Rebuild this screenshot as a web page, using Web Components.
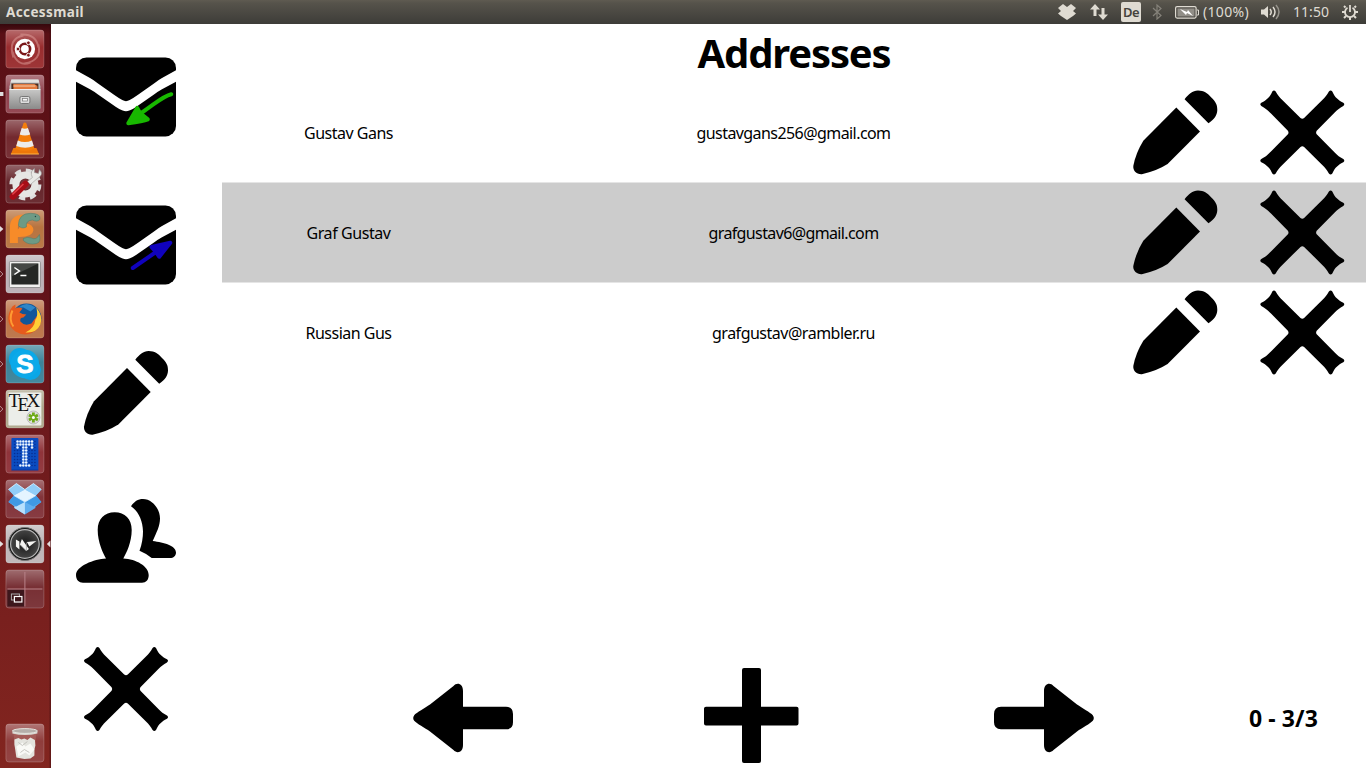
<!DOCTYPE html>
<html lang="en">
<head>
<meta charset="utf-8">
<title>Accessmail</title>
<style>
html,body{margin:0;height:100%;overflow:hidden;background:#fff}
</style>
</head>
<body>
<mail-desktop></mail-desktop>
<script>
const define = (name, html, setup) => customElements.define(name, class extends HTMLElement {
  connectedCallback() {
    if (this.shadowRoot) return;
    const root = this.attachShadow({mode: 'open'});
    root.innerHTML = typeof html === 'function' ? html(this) : html;
    if (setup) setup(this, root);
  }
});

/* Label whose tracking is adjusted so that it fills a given width. */
define('fit-label', '<style>:host{display:inline-block;white-space:nowrap;line-height:1}span{display:inline-block}</style><span><slot></slot></span>', (el, root) => {
  const span = root.querySelector('span');
  const target = +el.getAttribute('width');
  const n = el.textContent.length;
  const w = span.getBoundingClientRect().width;
  if (target && w) {
    const ls = (target - w) / n;
    span.style.letterSpacing = ls + 'px';
  }
});

/* Large pictograms of the application, on a 100 x 100 grid. */
const envelope = '<rect y="10.4" width="100" height="79" rx="10.5"/><path fill="#fff" d="M-1 22.8L0 23.3L14 31Q18 33.2 22 36.500L38 47.8Q47 54.2 50 54.2Q53 54.2 62 47.8L78 36.500Q82 33.2 86 31L101 22.8V34.3L86 42.3Q82 44.5 78 47.5L60 60Q53 64.3 50 64.3Q47 64.3 40 60L22 47.5Q18 44.5 14 42.3L-1 34.3Z"/>';
const glyphs = {
  inbox: envelope + '<g fill="#18b800" stroke="#18b800" stroke-linecap="round" stroke-linejoin="round"><path d="M95.3 47.2C87 49 80 56 66 65.5" fill="none" stroke-width="4"/><path stroke-width="4" d="M52.3 76.2L61.2 60.9L64 66L71.8 72.4Q67 74.5 52.3 76.2Z"/></g>',
  outbox: envelope + '<g fill="#1002bd" stroke="#1002bd" stroke-linecap="round" stroke-linejoin="round"><path d="M56.8 73L80 57" fill="none" stroke-width="4"/><path stroke-width="4" d="M94.3 47.8L83.3 61.700L79.500 56.5L75.500 51.9Z"/></g>',
  pencil: '<path d="M51 25L74.7 49L42.3 81.6Q31 88.8 16.5 91.7C11 92 7.5 88 8 83.5Q10.5 70.5 18 58.3Z"/><path d="M59.3 16.7C63.5 11.5 67 8 72.7 8C79 8.2 81.5 10 86 15C90.5 19.5 92 22 92 27.5C91.8 33 89 36.7 83.2 40.7Z"/>',
  people: '<path d="M30 67.4C27 62.5 21.7 51 21.7 39C21.7 28 28.5 21.3 38.7 21.3S55.7 28 55.7 39C55.7 51 50.5 62 47.3 67.4C60 68 72.7 75 72.7 84C72.7 89 70 91.7 66 91.7H7C3 91.7 0 89 0 84C0 75 18 68 30 67.4Z"/><path d="M55 15.3C58 10.5 62 8 67 8C76 8 84 17.5 84 27.5C84 35 80.5 41.5 76.7 50C88 51.5 100 54.5 100 61.5C100 65 97.5 67 94 67H75.7Q70.5 62.7 63.5 59.8Q67 50.5 67 40.5C66.8 29 62 20 55 15.3Z"/>',
  cross: '<path d="M20 9Q21.700 7 23.400 9C25.500 12.800 27 14.600 30 17.600L48.200 35.600Q50 36.800 51.800 35.600L70 17.600C73 14.600 74.500 12.800 76.600 9Q78.300 7 80 9C81.500 12.500 83 14.500 84.500 15.800C86.500 17.800 88 18.800 91 20.300Q93 21.800 91 23.500C87.200 25.500 85.400 27 82.400 30L64.400 48.200Q63.200 50 64.400 51.800L82.400 70C85.400 73 87.200 74.500 91 76.500Q93 78.200 91 79.700C88 81.200 86.500 82.200 84.500 84.200C83 85.500 81.500 87.500 80 91Q78.300 93 76.600 91C74.500 87.200 73 85.400 70 82.400L51.800 64.400Q50 63.200 48.200 64.400L30 82.400C27 85.400 25.500 87.200 23.400 91Q21.700 93 20 91C18.500 87.500 17 85.500 15.500 84.200C13.500 82.200 12 81.200 9 79.700Q7 78.200 9 76.500C12.800 74.500 14.600 73 17.600 70L35.600 51.800Q36.800 50 35.600 48.200L17.600 30C14.600 27 12.800 25.500 9 23.500Q7 21.800 9 20.300C12 18.800 13.500 17.800 15.500 15.800C17 14.500 18.500 12.500 20 9Z"/>',
  left: '<path d="M1.200 47.200C3.500 44.500 12 40 17 36.500L40.500 18C44 14 50 15.500 50 23V38.700H93Q100 39 100 46V54.300Q100 61.200 93 61.300H50V77C50 84.500 44 86 40.500 82L17 63.500C12 60 3.500 55.500 1.200 52.800Q-.8 50 1.200 47.200Z"/>',
  plus: '<path d="M42 0H57Q59 0 59 2V38.800H94.500Q96.500 38.800 96.500 40.500V55.500Q96.500 57.500 94.500 57.500H59V93Q59 95 57 95H42Q40 95 40 93V57.500H4Q2 57.500 2 55.500V40.500Q2 38.800 4 38.800H40V2Q40 0 42 0Z"/>'
};
glyphs.right = `<g transform="matrix(-1 0 0 1 100 0)">${glyphs.left}</g>`;

define('app-icon', el => `<style>:host{display:block;width:100px;height:100px;flex:none}svg{display:block;overflow:hidden}</style><svg width="100" height="100" viewBox="${el.getAttribute('offset') || '0 0'} 100 100">${glyphs[el.getAttribute('name')]}</svg>`);

/* Launcher artwork, on a 39 x 39 grid. */
let dots = '';
for (let y = 0; y < 9; y++) for (let x = 0; x < 8; x++) {
  const on = (y < 2 && x > 0 && x < 7) || (y === 2 && [1, 3, 4, 6].includes(x)) || (y > 2 && y < 8 && (x === 3 || x === 4)) || (y === 8 && x > 1 && x < 6);
  dots += `<circle cx="${9.200 + x * 2.900}" cy="${7 + y * 3}" r="${on ? 1.250 : .8}" fill="${on ? '#e8f4ff' : '#082f91'}"/>`;
}
const apps = {
  dash: ['#952426', '<g fill="none" stroke="#e0a09c" opacity=".5"><path stroke-width="2" d="M8 28Q2 9 18 6M15 5Q31 4 33 18M33 15Q37 31 19 34M25 33Q12 38 7 22"/></g><circle cx="19.500" cy="19.500" r="10.200" fill="#fff"/><circle cx="19.500" cy="19.500" r="5.200" fill="none" stroke="#7a1719" stroke-width="2.600"/><g fill="#7a1719" stroke="#fff" stroke-width=".9"><circle cx="12.600" cy="19.500" r="1.900"/><circle cx="23" cy="13.300" r="1.900"/><circle cx="23" cy="25.700" r="1.900"/></g>'],
  files: ['#8c3a46', '<path d="M6 5h27l2 7v22H4V12z" fill="#bbb"/><path d="M6 5h27l1 3H5z" fill="#e2e2e0"/><path d="M6 9h27v6H6z" fill="#4a2b20"/><path d="M8 9.500h21l3 2V15H8z" fill="#e2793e"/><path d="M8 11.500h22" stroke="#f8cfaa"/><rect x="4" y="14.500" width="31" height="20" rx="1" fill="url(#metal)"/><path d="M4 15h31" stroke="#eee"/><rect x="14.500" y="22" width="10" height="7" rx="1.500" fill="#ddd" stroke="#777"/><rect x="17" y="24" width="5" height="2.500" fill="#f8f8f8" stroke="#777" stroke-width=".7"/>'],
  vlc: ['#6d2026', '<path d="M8 28.500h23l2.500 6H5.500z" fill="#ed7709"/><path d="M5.500 34.500h28" stroke="#ffb340"/><path d="M18 4Q19.500 2 21 4L29 29Q20 34 10 29z" fill="#f47e0b"/><path d="M16.300 8.500Q19.500 10 22.500 8.500L24.800 15Q19.500 17 14.300 15zM12.400 21Q19.500 24 26.600 21L28.300 26.500Q20 30 10.900 26.500z" fill="#ececec"/>'],
  settings: ['#5f1c22', '<circle cx="20" cy="20" r="13.500" fill="none" stroke="#dedede" stroke-width="5" stroke-dasharray="6 4.600"/><circle cx="20" cy="20" r="9.500" fill="none" stroke="#e6e6e4" stroke-width="7"/><circle cx="20" cy="20" r="5" fill="#7d343a"/><path d="M27 13Q24 7 29 4L29 8L33 9L34 5Q39 10 32 14L25 20L22 17Z" fill="#e9e9e7" stroke="#999" stroke-width=".6"/><path d="M7.500 32L20 19.500" stroke="#a70d17" stroke-width="6.500" stroke-linecap="round"/><path d="M7 30L18 19.500" stroke="#e4434a" stroke-width="1.500"/>'],
  swirl: ['#b56e38', '<path d="M4.500 33.500V20C3.500 9 10 5 20 5L16 13Q12 14 12.500 20Q16 14 21 14Q28 15 28 21Q27 28 12.500 27.500V33.500Z" fill="#f78b29"/><path d="M13 16Q13 4 25 3.800Q36 4 34.500 10Q32 13 27 10.500Q20 11 21 17.500Q16 20 13 16ZM18 29Q22 27 26 28.500Q31 31 34 25Q36 33 31 34Q23 36 18 31Z" fill="#6d9a85" stroke="#4d7b6b" stroke-width=".5"/><circle cx="30" cy="7" r=".7" fill="#244"/>'],
  terminal: ['#b8adb3', '<rect x="4" y="7" width="31" height="26" rx="1" fill="#f0f0ef" stroke="#777" stroke-width=".7"/><rect x="6" y="9" width="27" height="21" fill="#252725"/><path d="M6 9h27L6 22z" fill="#565956" opacity=".65"/><path d="M9 13l5 3.500L9 20M15 21h6" fill="none" stroke="#fff" stroke-width="1.500"/>'],
  firefox: ['#b96e40', '<circle cx="21" cy="19" r="15" fill="#12569a"/><path d="M13 8Q21 1 30 8L25 12L18 8z" fill="#2d86c8"/><path d="M5 10Q7 6 10 5L10 9Q13 7 17 9L14 13Q17 15 21 15L18 18Q14 18 15 22Q19 27 26 24L34 13Q39 25 29 32Q20 38 10 32Q-1 24 5 10Z" fill="#e65a1d"/><path d="M31 8Q38 17 35 25Q31 34 20 33Q29 29 30 20Q33 17 31 8Z" fill="#ffcf36"/><path d="M7 11Q3 20 8 27" stroke="#ff9b32" fill="none" stroke-width="2"/>'],
  skype: ['#347e95', '<circle cx="14.500" cy="14.500" r="11" fill="#0aa6e6"/><circle cx="25" cy="25" r="10.500" fill="#0aa6e6"/><circle cx="19.500" cy="19.500" r="14.200" fill="#0ba9e9"/><text x="19.500" y="28.500" text-anchor="middle" fill="#fff" stroke="#fff" stroke-width=".8" font-family="Liberation Sans,sans-serif" font-weight="700" font-size="26">S</text>'],
  tex: ['#aaa386', '<rect x="3" y="3" width="33" height="33" rx="1" fill="#eceee9"/><g font-family="Liberation Serif,serif" font-size="19" fill="#111"><text x="3" y="17">T</text><text x="12" y="21.500">E</text><text x="21" y="17">X</text></g><circle cx="28" cy="28" r="6.500" fill="#ddd" stroke="#aaa" stroke-width=".7"/><path d="M28 23v10M23.500 25.500l9 5M32.500 25.500l-9 5" stroke="#6eaa18" stroke-width="2.800"/><circle cx="28" cy="28" r="1.500" fill="#fff"/>'],
  dots: ['#8b2b32', `<rect x="6" y="3.500" width="27" height="32" rx="1" fill="#0b4cc0"/><path d="M6 35.500h27" stroke="#0737a2"/>${dots}`],
  dropbox: ['#7d2b32', '<path d="M11 4L19.500 10L28 4L36 10L30.500 16L36 22.500L30 27V28.500L19.500 35L9 28.500V27L3 22.500L8.500 16L3 10Z" fill="#60adee"/><path d="M11 4L19.500 10L8.500 16L3 10ZM28 4L36 10L30.500 16L19.500 10Z" fill="#91cdf8"/><path d="M8.500 16L19.500 10L30.500 16L19.500 22.500Z" fill="#e4f4ff"/><path d="M8.500 16L19.500 22.500L11 27L3 22.500ZM30.500 16L19.500 22.500L28 27L36 22.500Z" fill="#4099e4"/><path d="M19.500 22.500V35L9 28.500V27L11 27Z" fill="#b9e0fc"/><path d="M8.500 16L19.500 22.500L30.500 16M3 10L11 4L19.500 10L28 4L36 10" fill="none" stroke="#e1f2ff" stroke-width=".8"/>'],
  kivy: ['#bcb4b6', '<circle cx="19.500" cy="19.500" r="16.500" fill="#171717" stroke="#777" stroke-width="1"/><circle cx="19.500" cy="19.500" r="14.300" fill="url(#disc)" stroke="#b5b5b5" stroke-width="1.200"/><path d="M10.500 15l3.500 2v8l-3.500-3zM14.500 20l2-5.500 7 10L21 26.500zM21.500 17.500l9.500-1-7 5.500z" fill="#f4f4f2"/><path d="M14.500 20L21 26.500V18" fill="none" stroke="#999" stroke-width=".7"/>'],
  workspace: ['#72272c', '<rect x="2" y="20" width="17" height="17" fill="#3d171c"/><path d="M19.500 2.500V37M2 19.500H37" stroke="#b98289"/><rect x="6" y="24.500" width="8" height="6" fill="#3d171c" stroke="#aaa"/><rect x="9" y="27" width="7.500" height="5.500" fill="#3d171c" stroke="#fff" stroke-width="1.200"/>'],
  trash: ['#8b3534', '<path d="M8 9h23l-2.500 24q-9 4-18 0z" fill="#a8615e" opacity=".75"/><path d="M9 16l4-1.500 3 1.500 3-1 3 1.500 3-2.500 4.500 2.500L30 22l-1 4v6l-4 3-6 .5-8-1.500-1-7-1-6z" fill="#e4e4df"/><path d="M11 23l6-4 3 4 5-3 4 6-5 6-4-3-7 4z" fill="#f9f9f6"/><path d="M15 29l4-3 5 3M13 19l4 3 5-4" fill="none" stroke="#bab9b2" stroke-width=".8"/><path d="M7 8v2q12.500 3 25 0V8z" fill="#d8d5d0"/><ellipse cx="19.500" cy="7.500" rx="12.500" ry="2.400" fill="#b5aeaa" stroke="#e5e5e0"/>']
};

define('launcher-tile', el => {
  const [color, art] = apps[el.getAttribute('app')];
  const mark = el.getAttribute('mark');
  const left = {dot: '<rect x="-6" y="17.500" width="4" height="4" fill="#ddd"/>', full: '<path d="M-6 16L-2 19.500L-6 23Z" fill="#e2dede"/>', open: '<path d="M-6 16L-2.500 19.500L-6 23" fill="none" stroke="#b69094"/>', active: '<path d="M-6 16L-2 19.500L-6 23ZM45 16L41.500 19.500L45 23Z" fill="#e2dede"/>'}[mark] || '';
  return `<style>:host{display:block;width:39px;height:39px;flex:none}svg{display:block;overflow:visible}</style>
  <svg width="39" height="39" viewBox="-.4 -.5 39 39"><defs><linearGradient id="shine" x2="0" y2="1"><stop stop-color="#fff" stop-opacity=".32"/><stop offset=".45" stop-color="#fff" stop-opacity=".04"/><stop offset="1" stop-color="#fff" stop-opacity=".08"/></linearGradient><linearGradient id="metal" x2="0" y2="1"><stop stop-color="#c9c9c8"/><stop offset="1" stop-color="#8b8b8a"/></linearGradient><radialGradient id="disc"><stop stop-color="#171717"/><stop offset="1" stop-color="#454545"/></radialGradient></defs>
  ${left}<rect x=".5" y=".5" width="38" height="38" rx="3" fill="${color}"/><rect x=".5" y=".5" width="38" height="38" rx="3" fill="url(#shine)" stroke="#fff" stroke-opacity=".2"/>${art}</svg>`;
});

define('app-launcher', `<style>:host{display:flex;flex-direction:column;box-sizing:border-box;width:51px;padding:5px 0 6px 5px;gap:6px;background:linear-gradient(90deg,transparent 49px,#35070c66 50px),linear-gradient(#36080d,#5a1016 10px,#611219 35%,#701b1d 60%,#82251f)}.end{margin-top:auto}</style>
<launcher-tile app="dash"></launcher-tile><launcher-tile app="files" mark="dot"></launcher-tile><launcher-tile app="vlc"></launcher-tile><launcher-tile app="settings"></launcher-tile><launcher-tile app="swirl" mark="full"></launcher-tile><launcher-tile app="terminal" mark="open"></launcher-tile><launcher-tile app="firefox" mark="open"></launcher-tile><launcher-tile app="skype" mark="open"></launcher-tile><launcher-tile app="tex" mark="open"></launcher-tile><launcher-tile app="dots"></launcher-tile><launcher-tile app="dropbox"></launcher-tile><launcher-tile app="kivy" mark="active"></launcher-tile><launcher-tile app="workspace"></launcher-tile><launcher-tile class="end" app="trash"></launcher-tile>`);

define('top-bar', `<style>:host{display:flex;align-items:center;height:24px;box-sizing:border-box;padding:0 7px 0 6px;background:linear-gradient(#5f5b51,#56534b 3px,#3d3c38);color:#dfdbd2;font:14px "Noto Sans",sans-serif}
b{margin-right:auto;font-size:13.500px}svg{display:block;flex:none}.key{width:20px;height:20px;border-radius:2px;background:#dfdbd2;color:#45433d;display:flex;align-items:center;justify-content:center;font-size:13px;font-weight:600}</style>
<b><fit-label width="78">Accessmail</fit-label></b>
<svg width="18" height="16" viewBox="0 0 18 16" fill="#dfdbd2"><path d="M5 0L9 3L13 0L18 4L15 7L18 9.500L15 12L9 16L3 12L0 9.500L3 7L0 4Z"/></svg>
<svg width="18" height="16" viewBox="0 0 18 16" style="margin-left:14px" fill="#dfdbd2"><path d="M5 0L10 5.500H6.500V12H3.500V5.500H0ZM13 16L8 10.500H11.500V4H14.500V10.500H18Z"/></svg>
<span class="key" style="margin-left:13px"><fit-label width="16">De</fit-label></span>
<svg width="10" height="16" viewBox="0 0 10 16" style="margin-left:11px" fill="none" stroke="#85827a" stroke-width="1.200"><path d="M1 4L9 11.500L5 15V1L9 4.500L1 12"/></svg>
<svg width="24" height="13" viewBox="0 0 24 13" style="margin-left:13px"><rect x=".6" y=".6" width="20.500" height="11.500" rx="1.500" fill="none" stroke="#dfdbd2" stroke-width="1.200"/><path d="M22 4h1.500v5H22" fill="none" stroke="#dfdbd2"/><rect x="2.500" y="2.500" width="17" height="8" fill="#918e87"/><path d="M5 3l7 3 1-2 5 6-6-3-1 2z" fill="#fff"/></svg>
<fit-label width="46" style="margin-left:4px">(100%)</fit-label>
<svg width="20" height="16" viewBox="0 0 20 16" style="margin-left:12px" fill="none" stroke="#dfdbd2" stroke-width="1.500"><path d="M0 5.500h3L7 2v12L3 10.500H0z" fill="#dfdbd2" stroke="none"/><path d="M9 5q2.500 3 0 6M12 3q4 5 0 10"/><path d="M15 1q6 7 0 14" stroke="#96938b"/></svg>
<fit-label width="36" style="margin-left:12px">11:50</fit-label>
<svg width="18" height="18" viewBox="0 0 18 18" style="margin-left:12px" fill="none" stroke="#dfdbd2"><path stroke-width="1.800" d="M6.500 4.800A5 5 0 1 0 11.500 4.800M9 2V9"/><path stroke-width="2" d="M4.500 4.500L3 3M13.500 4.500L15 3M4 9H1M14 9H17M5 13L3 15M13 13L15 15M9 14V17"/></svg>`);

define('nav-column', `<style>:host{display:grid;grid-auto-rows:148px;width:150px;margin-top:-1px;place-items:center;align-content:start}</style><app-icon name="inbox"></app-icon><app-icon name="outbox"></app-icon><app-icon name="pencil"></app-icon><app-icon name="people"></app-icon><app-icon name="cross"></app-icon>`);

define('address-row', el => `<style>:host{display:grid;grid-template-columns:252px 638px 126px 128px;height:100px;place-items:center}:host([selected]){background:linear-gradient(#e5e5e5,#e5e5e5) 0 0/100% 1px no-repeat #ccc;box-shadow:0 1px #e5e5e5}fit-label{font-size:16px;padding:2px 0 0 1px}</style>
<fit-label width="${el.getAttribute('name-width')}">${el.getAttribute('name')}</fit-label><fit-label width="${el.getAttribute('mail-width')}">${el.getAttribute('mail')}</fit-label><app-icon name="pencil" offset="-.3 -.5"></app-icon><app-icon name="cross" offset="-.3 -.5"></app-icon>`);

define('address-page', `<style>:host{display:flex;flex-direction:column;width:1144px;margin-left:21px;font-family:"Noto Sans",sans-serif;color:#000}
h1{margin:0;height:58px;display:flex;align-items:center;justify-content:center;font-size:40px}footer{display:flex;margin-top:auto;height:100px}footer>*{flex:none}.count{margin:39px 0 0 155px;font-size:23px;font-weight:700}</style>
<h1><fit-label width="193">Addresses</fit-label></h1>
<address-row name="Gustav Gans" name-width="89" mail="gustavgans256@gmail.com" mail-width="194"></address-row>
<address-row selected name="Graf Gustav" name-width="84" mail="grafgustav6@gmail.com" mail-width="170"></address-row>
<address-row name="Russian Gus" name-width="86" mail="grafgustav@rambler.ru" mail-width="163"></address-row>
<footer><app-icon name="left" style="margin-left:191px"></app-icon><app-icon name="plus" style="margin-left:189px"></app-icon><app-icon name="right" style="margin-left:192px"></app-icon><fit-label class="count" width="69">0 - 3/3</fit-label></footer>`);

define('mail-desktop', `<style>:host{display:grid;grid-template:24px 744px/51px 150px 1165px;width:1366px;height:768px;overflow:hidden;background:#fff}top-bar{grid-column:1/-1}</style><top-bar></top-bar><app-launcher></app-launcher><nav-column></nav-column><address-page></address-page>`);
</script>
</body>
</html>
